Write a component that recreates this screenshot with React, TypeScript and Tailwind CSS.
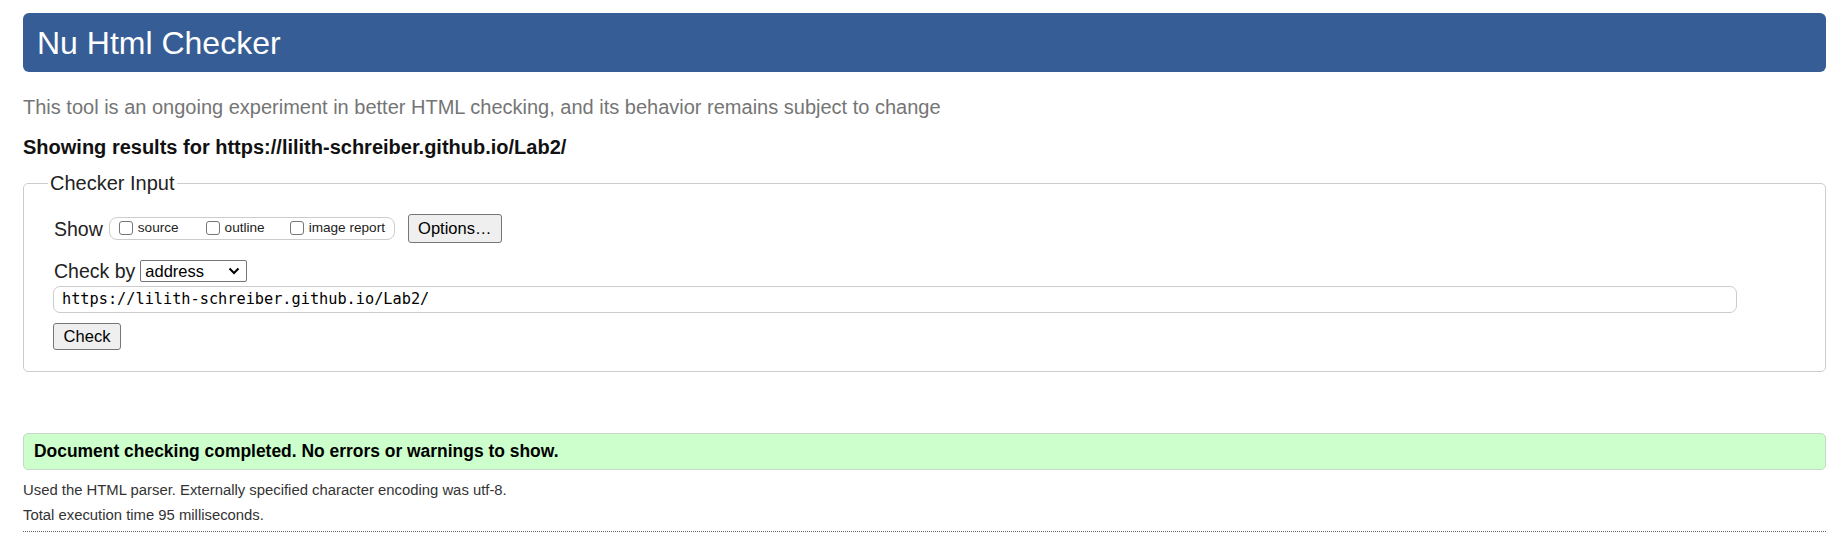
import React from "react";

const font = { fontFamily: '"Liberation Sans", Arial, sans-serif' };

function Box({ label }: { label: string }) {
  return (
    <label className="flex items-center">
      <span className="inline-block h-[14px] w-[14px] rounded-[3px] border border-[#767676] bg-white" />
      <span className="ml-[5px] text-[13.6px] text-[#222]">{label}</span>
    </label>
  );
}

export default function App() {
  return (
    <div className="bg-white pl-[23px] pr-[13px] pt-[13px] pb-[20px] text-[#222]" style={font}>
      <h1 className="flex h-[59px] items-center rounded-[6px] bg-[#365d95] pl-[14px] pt-[1px] text-[32px] leading-none text-white">
        Nu Html Checker
      </h1>

      <p className="mt-[23px] text-[20px] leading-[24px] text-[#757575]">
        This tool is an ongoing experiment in better HTML checking, and its behavior remains subject to change
      </p>

      <p className="mt-[16px] text-[20px] font-bold leading-[24px] text-[#111]">
        Showing results for https://lilith-schreiber.github.io/Lab2/
      </p>

      <fieldset className="mt-[12px] rounded-[5px] border border-[#cccccc] pl-[24px] pr-[20px] pb-[21px]">
        <legend className="px-[2px] text-[20px] leading-[24px] text-[#222]">Checker Input</legend>
        <div className="pl-[6px] pt-[19px]">
          <div className="flex h-[29px] items-center">
            <span className="text-[19.5px] leading-[24px]">Show</span>
            <div className="ml-[6px] flex h-[23px] w-[286px] items-center rounded-[8px] border border-[#cccccc] pl-[9px]">
              <Box label="source" />
              <div className="w-[27px]" />
              <Box label="outline" />
              <div className="w-[25px]" />
              <Box label="image report" />
            </div>
            <button className="ml-[13px] h-[29px] w-[94px] rounded-[3px] border border-[#767676] bg-[#efefef] text-[16.5px] text-black">
              Options…
            </button>
          </div>

          <div className="mt-[17px] flex h-[22px] items-center">
            <span className="text-[19.5px] leading-[24px]">Check by</span>
            <div className="ml-[5px] flex h-[22px] w-[107px] items-center justify-between rounded-[2px] border border-[#767676] bg-white pl-[4px] pr-[6px] text-[16.5px] text-black">
              <span>address</span>
              <svg width="12" height="8" viewBox="0 0 12 8" fill="none">
                <path d="M1.5 1.5 L6 6 L10.5 1.5" stroke="#000" strokeWidth="2" />
              </svg>
            </div>
          </div>

          <div
            className="-ml-[1px] mt-[4px] flex h-[27px] w-[1684px] items-center rounded-[7px] border border-[#cccccc] pl-[8px] text-[15.25px] text-black"
            style={{ fontFamily: '"DejaVu Sans Mono", monospace' }}
          >
            https://lilith-schreiber.github.io/Lab2/
          </div>

          <button className="-ml-[1px] mt-[10px] h-[27px] w-[68px] rounded-[3px] border border-[#767676] bg-[#efefef] text-[16.5px] text-black">
            Check
          </button>
        </div>
      </fieldset>

      <div className="mt-[61px] flex h-[37px] items-center rounded-[5px] border border-[#c6d9c6] bg-[#ccffcc] pl-[10px]">
        <p className="text-[17.45px] font-bold text-black">Document checking completed. No errors or warnings to show.</p>
      </div>

      <p className="mt-[8px] text-[14.85px] leading-[25px] text-[#333]">
        Used the HTML parser. Externally specified character encoding was utf-8.
      </p>
      <p className="text-[14.85px] leading-[24px] text-[#333]">Total execution time 95 milliseconds.</p>
      <div className="mt-[4px] border-t border-dotted border-[#666]" />
    </div>
  );
}
